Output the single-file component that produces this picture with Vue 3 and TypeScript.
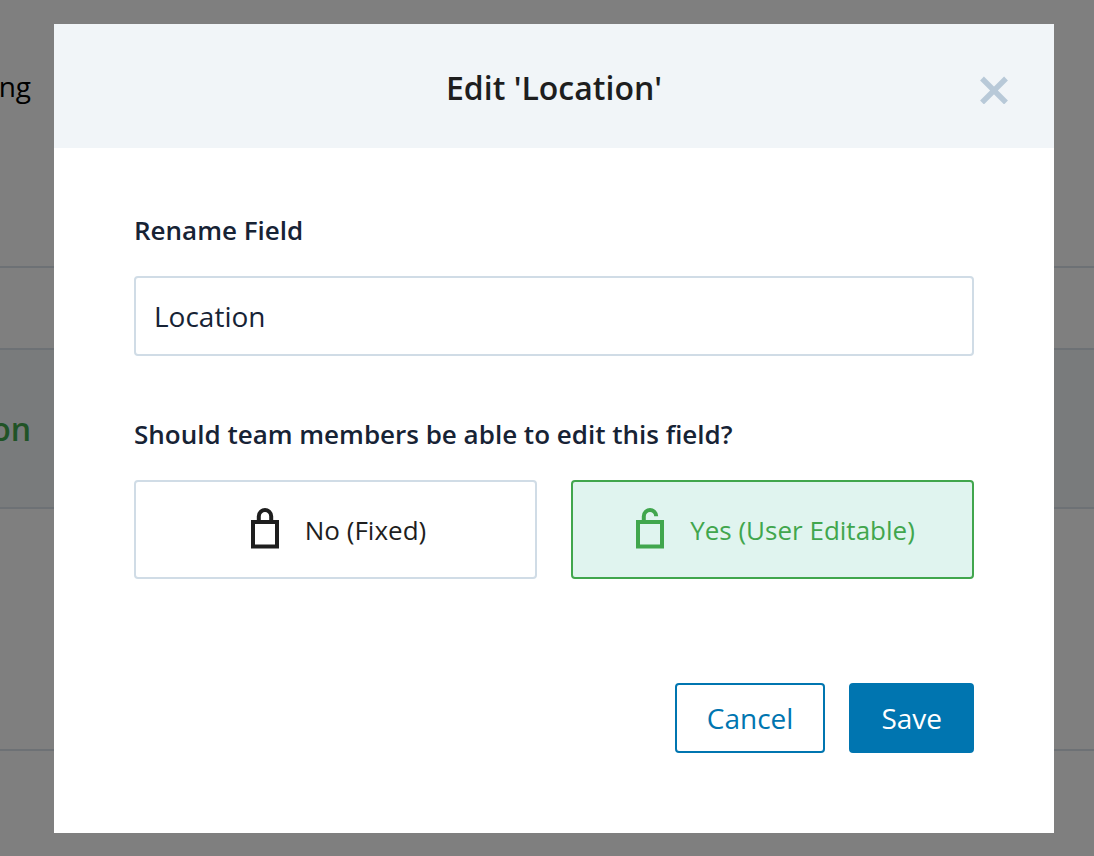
<script setup lang="ts">
import { ref } from 'vue'

type Access = 'fixed' | 'editable'

const fieldName = ref('Location')
const access = ref<Access>('editable')
const options: { value: Access; label: string }[] = [
  { value: 'fixed', label: 'No (Fixed)' },
  { value: 'editable', label: 'Yes (User Editable)' },
]
</script>

<template>
  <div class="page">
    <div class="backdrop-list" aria-hidden="true">
      <div class="row row-intro"><span class="cell">ng</span></div>
      <div class="row row-head"></div>
      <div class="row row-active"><span class="cell">on</span></div>
      <div class="row row-tall"></div>
    </div>

    <div class="overlay">
      <form class="modal" role="dialog" aria-modal="true" aria-labelledby="modal-title" @submit.prevent>
        <header class="modal-header">
          <h1 id="modal-title">Edit 'Location'</h1>
          <button type="button" class="close" aria-label="Close">
            <svg viewBox="0 0 28 28" width="28" height="28">
              <path d="M2 2.5 26 26.5M26 2.5 2 26.5" fill="none" stroke="currentColor" stroke-width="5.4" />
            </svg>
          </button>
        </header>

        <div class="modal-body">
          <label class="caption" for="field-name">Rename Field</label>
          <input id="field-name" v-model="fieldName" class="text-input" type="text" />

          <fieldset class="choices">
            <legend class="caption">Should team members be able to edit this field?</legend>
            <div class="choice-grid">
              <label
                v-for="option in options"
                :key="option.value"
                class="choice"
                :class="{ selected: access === option.value }"
              >
                <input v-model="access" type="radio" name="access" :value="option.value" />
                <svg viewBox="0 0 28 41" width="28" height="41" fill="none" stroke="currentColor" stroke-width="4">
                  <rect x="2" y="14" width="24" height="24.5" />
                  <path v-if="option.value === 'fixed'" d="M7.8 13V8.3a6.2 6.2 0 0 1 12.4 0V13" />
                  <path v-else d="M7.8 13V8.3a6.2 6.2 0 0 1 12.4 0" />
                </svg>
                <span>{{ option.label }}</span>
              </label>
            </div>
          </fieldset>

          <div class="actions">
            <button type="button" class="btn btn-outline">Cancel</button>
            <button type="submit" class="btn btn-solid">Save</button>
          </div>
        </div>
      </form>
    </div>
  </div>
</template>

<style>
body {
  margin: 0;
}
</style>

<style scoped>
.page {
  position: relative;
  min-height: 100vh;
  overflow: hidden;
  background: #fff;
  color: #1e1e1e;
  font-family: "Open Sans", "Noto Sans", sans-serif;
}

.page *,
.page *::before {
  box-sizing: border-box;
}

.backdrop-list {
  position: absolute;
  inset: 0;
  font-size: 28px;
  line-height: 40px;
  color: #000;
}

.row {
  display: flex;
  align-items: center;
  border-bottom: 2px solid #dae3eb;
}

.row-intro {
  height: 268px;
  padding-bottom: 94px;
}

.row-head {
  height: 82px;
}

.row-active {
  height: 159px;
  background: #f3f6f9;
  color: #41a64d;
  font-size: 32px;
  font-weight: 600;
}

.row-tall {
  height: 242px;
}

.cell {
  display: flex;
  justify-content: flex-end;
  width: 31px;
}

.overlay {
  position: relative;
  display: flex;
  justify-content: center;
  align-items: flex-start;
  min-height: 100vh;
  padding: 24px 40px 23px 54px;
  background: rgba(0, 0, 0, 0.5);
}

.modal {
  flex: 1;
  max-width: 1000px;
  background: #fff;
}

.modal-header {
  display: grid;
  grid-template-columns: 1fr auto 1fr;
  align-items: center;
  padding: 40px 46px 36px;
  background: #f1f5f8;
}

.modal-header h1 {
  grid-column: 2;
  margin: 0;
  font-size: 32px;
  line-height: 48px;
  font-weight: 600;
}

.close {
  justify-self: end;
  display: flex;
  padding: 4px 0 0;
  border: 0;
  background: none;
  color: #b8c9d8;
  cursor: pointer;
}

.modal-body {
  padding: 64px 80px 80px;
}

.caption {
  display: block;
  margin: 0 0 28px;
  padding: 0;
  font-size: 26px;
  line-height: 36px;
  font-weight: 600;
  color: #172335;
}

.text-input {
  display: block;
  width: 100%;
  height: 80px;
  padding: 0 18px;
  border: 2px solid #d0dce6;
  border-radius: 4px;
  background: #fff;
  color: #172335;
  font: inherit;
  font-size: 28px;
  outline: none;
}

.choices {
  min-width: 0;
  margin: 60px 0 0;
  padding: 0;
  border: 0;
}

.choice-grid {
  display: grid;
  grid-template-columns: 1fr 1fr;
  gap: 34px;
}

.choice {
  position: relative;
  display: flex;
  align-items: center;
  justify-content: center;
  gap: 26px;
  height: 99px;
  padding-left: 6px;
  border: 2px solid #d0dce6;
  border-radius: 4px;
  font-size: 26px;
  line-height: 36px;
  cursor: pointer;
}

.choice svg {
  margin-bottom: 2px;
}

.choice input {
  position: absolute;
  inset: 0;
  margin: 0;
  opacity: 0;
  cursor: pointer;
}

.choice.selected {
  border-color: #41a64d;
  background: #e0f4ef;
  color: #41a64d;
}

.actions {
  display: flex;
  justify-content: flex-end;
  gap: 24px;
  margin-top: 104px;
}

.btn {
  padding: 13px 30px;
  border: 2px solid #0075b0;
  border-radius: 4px;
  font: inherit;
  font-size: 28px;
  line-height: 40px;
  cursor: pointer;
}

.btn-outline {
  background: #fff;
  color: #0075b0;
}

.btn-solid {
  background: #0075b0;
  color: #fff;
}
</style>
